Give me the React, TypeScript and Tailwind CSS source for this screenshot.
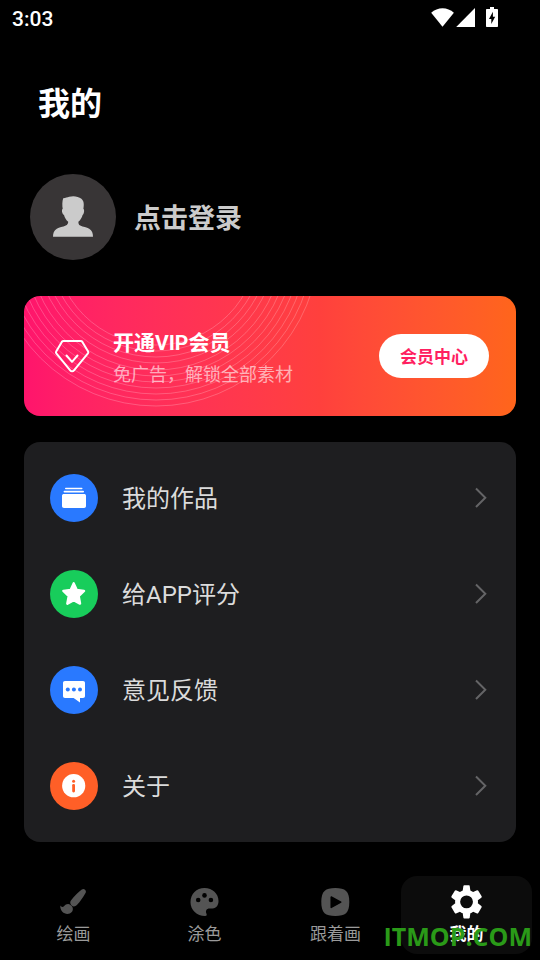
import { useState } from 'react';
import type { ReactNode } from 'react';

type MenuItem = {
  id: string;
  label: string;
  color: string;
  icon: ReactNode;
};

type Tab = {
  id: string;
  label: string;
  icon: ReactNode;
};

const RING_RADII = [102, 108, 114, 120, 127, 133, 139, 145, 151, 157, 163];

const menuItems: MenuItem[] = [
  {
    id: 'works',
    label: '我的作品',
    color: 'bg-[#2979ff]',
    icon: (
      <svg className="h-12 w-12" viewBox="0 0 48 48" fill="#fff">
        <rect x="15" y="13.800" width="17.500" height="1.500" rx=".7" />
        <rect x="13.600" y="16.800" width="20.400" height="1.800" rx=".8" />
        <path d="M14 20h20c1.200 0 2 .6 2 1.800v10.200c0 1.200-.8 2-2 2H14c-1.200 0-2-.8-2-2V21.800c0-1.200.8-1.800 2-1.800z" />
      </svg>
    ),
  },
  {
    id: 'rate',
    label: '给APP评分',
    color: 'bg-[#18cd5b]',
    icon: (
      <svg className="h-12 w-12" viewBox="0 0 48 48" fill="#fff" stroke="#fff" strokeWidth="2.500" strokeLinejoin="round">
        <path d="M23.700 13.400l3 6.600 7.300.9-5.400 5.100 1.400 7.600-6.300-3.500-6.300 3.500 1.400-7.600-5.400-5.100 7.300-.9z" />
      </svg>
    ),
  },
  {
    id: 'feedback',
    label: '意见反馈',
    color: 'bg-[#2979ff]',
    icon: (
      <svg className="h-12 w-12" viewBox="0 0 48 48" fill="#fff">
        <path d="M15 15h18c1.300 0 2 .8 2 2v13c0 1.200-.7 2-2 2h-3v4.600L23.600 32H15c-1.300 0-2-.8-2-2V17c0-1.200.7-2 2-2z" />
        <g fill="#2979ff">
          <circle cx="17.800" cy="23.400" r="2" />
          <circle cx="23.900" cy="23.400" r="2" />
          <circle cx="30" cy="23.400" r="2" />
        </g>
      </svg>
    ),
  },
  {
    id: 'about',
    label: '关于',
    color: 'bg-[#ff5f27]',
    icon: (
      <svg className="h-12 w-12" viewBox="0 0 48 48">
        <circle cx="23.700" cy="23.700" r="11.600" fill="#fff" />
        <circle cx="23.600" cy="19.200" r="1.500" fill="#ff5f27" />
        <rect x="22.200" y="22" width="2.800" height="8.400" rx="1.300" fill="#ff5f27" />
      </svg>
    ),
  },
];

const tabs: Tab[] = [
  {
    id: 'draw',
    label: '绘画',
    icon: (
      <svg className="h-9 w-9" viewBox="0 0 36 36" fill="currentColor">
        <path d="M25.800 5.600c1-.7 2.300-.8 3.200.1 1 .9 1.200 2.200.5 3.300-2.100 4-5.100 8.300-8.600 12.100-1.400 1.500-3.800 1.800-5.300.4-1.700-1.500-1.800-4-.3-5.600 3.300-3.800 6.800-7.400 10.500-10.300z" />
        <path d="M4.300 21.500c.8 1.500 2.500 2 3.900.6 1.500-2 4.200-2.700 6.300-1.200 2.600 1.600 3.100 4.900 1.300 7.100-3.600 4.100-12 1.500-11.500-6.500z" />
      </svg>
    ),
  },
  {
    id: 'color',
    label: '涂色',
    icon: (
      <svg className="h-9 w-9" viewBox="0 0 36 36">
        <path
          fill="currentColor"
          d="M17.500 4C9.500 4 3.500 10 3.500 18.200c0 7.800 6.500 13.800 14.500 13.800 2 0 2-1.200 1.300-2.800-1-2.600.3-4.800 3.200-4.800h3c4 0 6-3.400 6-7.400C31.500 9.600 25.500 4 17.500 4z"
        />
        <circle cx="11.200" cy="16" r="2.300" fill="#000" />
        <circle cx="17.500" cy="11.400" r="2.300" fill="#000" />
        <circle cx="23.900" cy="16" r="2.300" fill="#000" />
      </svg>
    ),
  },
  {
    id: 'follow',
    label: '跟着画',
    icon: (
      <svg className="h-9 w-9" viewBox="0 0 36 36">
        <path fill="currentColor" d="M17.300 4c10 0 14 3 14 14s-4 14-14 14-14-3-14-14 4-14 14-14z" />
        <path fill="#000" stroke="#000" strokeWidth="1.500" strokeLinejoin="round" d="M13.200 13v10.400l9.600-5.200z" />
      </svg>
    ),
  },
  {
    id: 'mine',
    label: '我的',
    icon: (
      <svg className="h-9 w-9" viewBox="0.500 0.300 23.600 23.600" fill="currentColor">
        <path d="M19.500 12c0-.3 0-.7-.1-1l2.300-1.700c.3-.2.300-.6.200-.9l-2.200-3.700c-.2-.3-.5-.4-.8-.3l-2.600 1.100c-.6-.4-1.200-.8-1.800-1L14.100 1.700c0-.4-.3-.6-.6-.6h-3c-.3 0-.6.200-.6.600L9.500 4.500c-.7.2-1.200.6-1.800 1L5.100 4.400c-.3-.1-.6 0-.8.300L2.100 8.400c-.1.300-.1.700.2.900L4.600 11c-.1.300-.1.700-.1 1s0 .7.100 1l-2.300 1.700c-.3.200-.3.600-.2.900l2.200 3.700c.2.300.5.400.8.300l2.600-1.100c.6.400 1.100.8 1.800 1l.4 2.800c0 .4.300.6.600.6h3c.3 0 .6-.2.600-.6l.4-2.800c.6-.2 1.200-.6 1.800-1l2.600 1.100c.3.100.6 0 .8-.3l2.200-3.700c.1-.3.100-.7-.2-.9L19.400 13c.1-.3.1-.7.100-1zM12 16.200a4.200 4.200 0 1 1 0-8.400 4.200 4.200 0 0 1 0 8.400z" />
      </svg>
    ),
  },
];

function StatusBar() {
  return (
    <div className="flex h-9 items-center justify-between pl-3 pr-10 text-white">
      <span className="pt-0.5 text-[21px] font-medium leading-9">3:03</span>
      <svg className="h-6 w-[70px]" viewBox="0 0 70 24" fill="currentColor">
        <path d="M1.200 6.800C7.500.8 17.600.8 23.900 6.800L12.500 20.800z" />
        <path d="M45 2v19H26.200z" />
        <path
          fillRule="evenodd"
          d="M60 1h4v2h3c.6 0 1 .4 1 1v16c0 .6-.4 1-1 1H57c-.6 0-1-.4-1-1V4c0-.6.4-1 1-1h3zm2.900 4.800L59 13h2.300v5l3.900-7.200h-2.300z"
        />
      </svg>
    </div>
  );
}

function VipBanner() {
  return (
    <section className="relative mx-6 mt-9 flex h-[120px] items-center overflow-hidden rounded-2xl bg-linear-to-r from-[#ff146c] via-[#ff403d] via-60% to-[#ff651b] pl-[26px] pr-[27px]">
      <svg className="absolute left-0 top-0 h-[120px] w-[300px]" viewBox="0 0 300 120" fill="none" stroke="#fff" strokeOpacity=".22">
        {RING_RADII.map((r) => (
          <circle key={r} cx="132" cy="-53" r={r} />
        ))}
      </svg>
      <svg
        className="relative h-11 w-11"
        viewBox="0 0 44 44"
        fill="none"
        stroke="#fff"
        strokeWidth="2"
        strokeLinecap="round"
        strokeLinejoin="round"
      >
        <path d="M13.500 7h17.200c.8 0 1.300.3 1.700.9l5.700 9.600c.4.700.3 1.300-.2 1.900L24 36.400c-1 1.200-2.800 1.200-3.800 0L6.300 19.400c-.5-.6-.5-1.200-.1-1.900L11.800 7.900c.4-.6.900-.9 1.700-.9z" />
        <path d="M16.500 21.500l5.500 6.300 5.500-6.300" />
      </svg>
      <div className="relative ml-[19px] flex-1 pt-1.5">
        <h2 className="text-[21px] font-bold leading-8 text-white">开通VIP会员</h2>
        <p className="text-[18px] leading-8 text-white/60">免广告，解锁全部素材</p>
      </div>
      <button className="relative h-11 w-[110px] rounded-full bg-white pt-1 text-[17px] font-bold text-[#ff1f60]">
        会员中心
      </button>
    </section>
  );
}

function MenuRow({ item }: { item: MenuItem }) {
  return (
    <li>
      <button className="flex h-24 w-full items-center pl-[26px] pr-6 text-left">
        <span className={`rounded-full ${item.color}`}>{item.icon}</span>
        <span className="ml-6 flex-1 pt-0.5 text-[24px] leading-9 text-[#dbdbdb]">{item.label}</span>
        <svg className="h-6 w-6" viewBox="0 0 24 24" fill="none" stroke="#646466" strokeWidth="2">
          <path d="M8 2.500L17.300 11.700 8 21" />
        </svg>
      </button>
    </li>
  );
}

export default function App() {
  const [activeTab, setActiveTab] = useState('mine');

  return (
    <div className="flex min-h-screen flex-col bg-black font-[Roboto,'Noto_Sans_CJK_SC',sans-serif]">
      <StatusBar />
      <main className="flex-1">
        <h1 className="ml-[38px] mt-11 text-[32px] font-bold leading-[48px] text-white">我的</h1>

        <button className="ml-[30px] mt-[46px] flex items-center text-left">
          <svg className="h-[86px] w-[86px] rounded-full bg-[#383536]" viewBox="0 0 86 86" fill="#cbcbcb">
            <path d="M33.200 24.200c2.500-.2 4-.8 6-1.400 4-1.200 9-.6 12.200 2 2.700 2.200 2.700 6 2 10 1.300 1.200.8 5-.8 6.200-.7 3-2.300 5-4.200 6.800 0 2 .3 3 1.800 3.800 3 1.500 6.400 1.700 9 3.200 2.800 1.600 3.800 4.600 3.800 8H23c0-3.400 1-6.400 3.800-8 2.600-1.500 6-1.700 9-3.200 1.500-.8 2.400-1.800 2.400-3.800-2-1.800-3.500-3.800-4.200-6.800-2-1.200-2.700-5-1.300-6.200-.5-3-.6-7.400.5-10.600z" />
          </svg>
          <span className="ml-[18px] pt-1 text-[27px] font-bold leading-10 text-[#cbcbcb]">点击登录</span>
        </button>

        <VipBanner />

        <ul className="mx-6 mt-[26px] rounded-2xl bg-[#1e1e20] py-2">
          {menuItems.map((item) => (
            <MenuRow key={item.id} item={item} />
          ))}
        </ul>
      </main>

      <nav className="relative mt-[34px] grid grid-cols-4 px-2 pb-[6px]">
        {tabs.map((tab) => {
          const active = tab.id === activeTab;
          return (
            <button
              key={tab.id}
              onClick={() => setActiveTab(tab.id)}
              className={`flex h-[78px] flex-col items-center rounded-2xl pt-2 ${
                active ? 'bg-[#0c0c0c] font-bold text-white' : 'text-[#545454]'
              }`}
            >
              {tab.icon}
              <span className={`text-[17px] leading-7 ${active ? 'text-white' : 'text-[#9a9a9a]'}`}>{tab.label}</span>
            </button>
          );
        })}
        <span className="pointer-events-none absolute bottom-2 right-2 font-['Open_Sans',sans-serif] text-[25px] font-bold leading-8 text-[#2a9a18]">
          ITMOP.COM
        </span>
      </nav>
    </div>
  );
}
